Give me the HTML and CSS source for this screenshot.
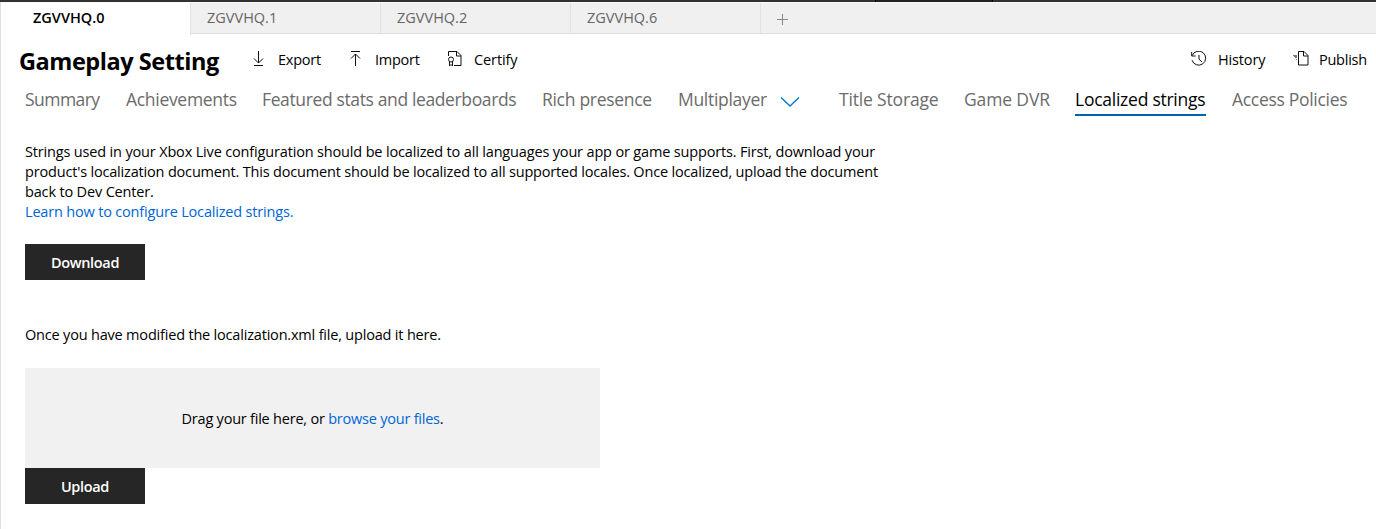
FILE: index.html
```
<!DOCTYPE html>
<html lang="en">
<head>
<meta charset="utf-8">
<title>Gameplay Setting</title>
<link rel="stylesheet" href="styles.css">
</head>
<body>
<div class="topstrip"><span class="topstrip-active"></span></div>
<div class="page">
  <div class="tabs">
    <div class="tab active">ZGVVHQ.0</div>
    <div class="tab">ZGVVHQ.1</div>
    <div class="tab">ZGVVHQ.2</div>
    <div class="tab">ZGVVHQ.6</div>
    <div class="tab-add"><svg width="11" height="11" viewBox="0 0 11 11"><path d="M5.5 0v11M0 5.5h11"/></svg></div>
  </div>
  <header class="header">
    <h1 class="title">Gameplay Setting</h1>
    <div class="command export">
      <svg class="icon" width="16" height="16" viewBox="0 0 16 16"><path d="M7.5 0v12M3 7.5l4.5 4.5L12 7.5M3 14.5h9"/></svg>
      <span class="label">Export</span>
    </div>
    <div class="command import">
      <svg class="icon" width="16" height="16" viewBox="0 0 16 16"><path d="M3 .5h9M7.5 15V3M3 7.5L7.500 3 12 7.500"/></svg>
      <span class="label">Import</span>
    </div>
    <div class="command certify">
      <svg class="icon" width="16" height="16" viewBox="0 0 16 16"><path d="M1.500 5V.5h8.500l4 4v10H7M9.500.5v4.500h4.500"/><circle cx="4" cy="8.500" r="2.500"/><path d="M2.500 10.500v4.500L4 13.500 5.500 15v-4.500"/></svg>
      <span class="label">Certify</span>
    </div>
    <div class="command history">
      <svg class="icon" width="16" height="16" viewBox="0 0 16 16"><path d="M1.200 4.500A7 7 0 1 1 1 9.200M.7 1v4h4M8 4v4.200l3 2.800"/></svg>
      <span class="label">History</span>
    </div>
    <div class="command publish">
      <svg class="icon" width="16" height="16" viewBox="0 0 16 16"><path d="M5.500.5h5.500l4 4v9.500H5.500zM10.500.5v4.500h4.500"/><path class="faint" d="M0 4.500h4M1 5.500h3M2 6.500h2M3 8.500h1"/></svg>
      <span class="label">Publish</span>
    </div>
  </header>
  <nav class="nav">
    <a class="nav-item summary">Summary</a>
    <a class="nav-item achievements">Achievements</a>
    <a class="nav-item featured">Featured stats and leaderboards</a>
    <a class="nav-item presence">Rich presence</a>
    <a class="nav-item multiplayer">Multiplayer</a>
    <svg class="chevron" width="20" height="12" viewBox="0 0 20 12"><path d="M1 1.500l9 8.500 9-8.500"/></svg>
    <a class="nav-item storage">Title Storage</a>
    <a class="nav-item dvr">Game DVR</a>
    <a class="nav-item strings current">Localized strings</a>
    <a class="nav-item policies">Access Policies</a>
  </nav>
  <main class="content">
    <p class="intro">Strings used in your Xbox Live configuration should be localized to all languages your app or game supports. First, download your<br><span class="snug">product's localization document. This document should be localized to all supported locales. Once localized, upload the document</span><br>back to Dev Center.<br><a class="link snug">Learn how to configure Localized strings.</a></p>
    <button class="button download">Download</button>
    <p class="hint">Once you have modified the localization.xml file, upload it here.</p>
    <div class="dropzone"><span>Drag your file here, or <a class="link">browse your files</a>.</span></div>
    <button class="button upload">Upload</button>
  </main>
</div>
</body>
</html>
```
FILE: styles.css
```
* { box-sizing: border-box; }
body {
  margin: 0;
  background: #fff;
  color: #000;
  font: 14.5px/20px "Open Sans", sans-serif;
  overflow: hidden;
}
.topstrip { display: flex; height: 2px; background: #333132; }
.topstrip-active {
  width: 118px;
  margin-left: 875px;
  background: #222;
  border: solid #000;
  border-width: 0 1px;
}
.page { height: 527px; border-left: 1px solid #dfdfdf; }
svg { display: block; flex: none; fill: none; stroke: #111; stroke-width: 1; }

.tabs {
  display: flex;
  height: 32px;
  background: #f0f0f0;
  border-top: 1px solid #f8f8f8;
  border-bottom: 1px solid #e0e0e0;
}
.tab {
  width: 190px;
  padding: 5px 0 0 16px;
  border-right: 1px solid #e2e2e2;
  color: #666;
}
.tab.active {
  height: 32px;
  padding-left: 32px;
  background: #fff;
  color: #000;
  font-weight: 600;
}
.tab-add { padding: 11px 0 0 16px; }
.tab-add svg { stroke: #888; }

.header { display: flex; height: 49px; padding: 0 8px 0 18px; }
.title {
  width: 232px;
  margin: 11px 0 0;
  font-size: 23.5px;
  line-height: 32px;
  font-weight: 700;
  letter-spacing: -0.45px;
  white-space: nowrap;
}
.command { display: flex; height: 20px; margin-top: 16px; letter-spacing: -0.25px; }
.command .icon { margin-top: 1px; }
.command .label { margin-left: 11px; }
.export { width: 97px; }
.import { width: 99px; }
.certify { width: 80px; letter-spacing: -0.1px; }
.history { margin-left: auto; width: 102px; letter-spacing: -0.15px; }
.publish { width: 75px; }
.publish .label { margin-left: 10px; }
.faint { stroke: #777; }

.nav {
  display: flex;
  height: 34px;
  padding-left: 24px;
  color: #6b6b6b;
  font-size: 17.5px;
  line-height: 24px;
  white-space: nowrap;
}
.nav-item { height: 33px; padding-top: 4px; flex: none; margin-right: 26px; letter-spacing: -0.3px; }
.summary { width: 75px; letter-spacing: -0.55px; }
.achievements { width: 110px; }
.featured { width: 254px; letter-spacing: -0.37px; }
.presence { width: 110px; }
.multiplayer { width: 90px; margin-right: 12px; }
.storage { width: 99px; letter-spacing: -0.17px; }
.dvr { width: 85px; letter-spacing: -0.14px; }
.strings { width: 131px; letter-spacing: -0.25px; }
.current { color: #000; border-bottom: 2px solid #0063b1; }
.chevron { margin: 13px 39px 0 0; stroke: #0078d7; stroke-width: 1.4; }

.content { padding: 25px 24px 0; letter-spacing: -0.163px; }
.intro { margin: 0 0 22px; white-space: nowrap; }
.snug { letter-spacing: -0.18px; }
.link { color: #0066d6; }
.button {
  display: block;
  width: 120px;
  height: 36px;
  padding: 2px 0 0;
  border: 0;
  background: #262626;
  color: #fff;
  font: 600 14.5px/20px "Open Sans", sans-serif;
  letter-spacing: -0.33px;
}
.hint { margin: 45px 0 23px; letter-spacing: -0.19px; }
.dropzone {
  display: flex;
  align-items: center;
  justify-content: center;
  width: 575px;
  height: 100px;
  padding-top: 2px;
  background: #f1f1f1;
  letter-spacing: -0.22px;
}
```
